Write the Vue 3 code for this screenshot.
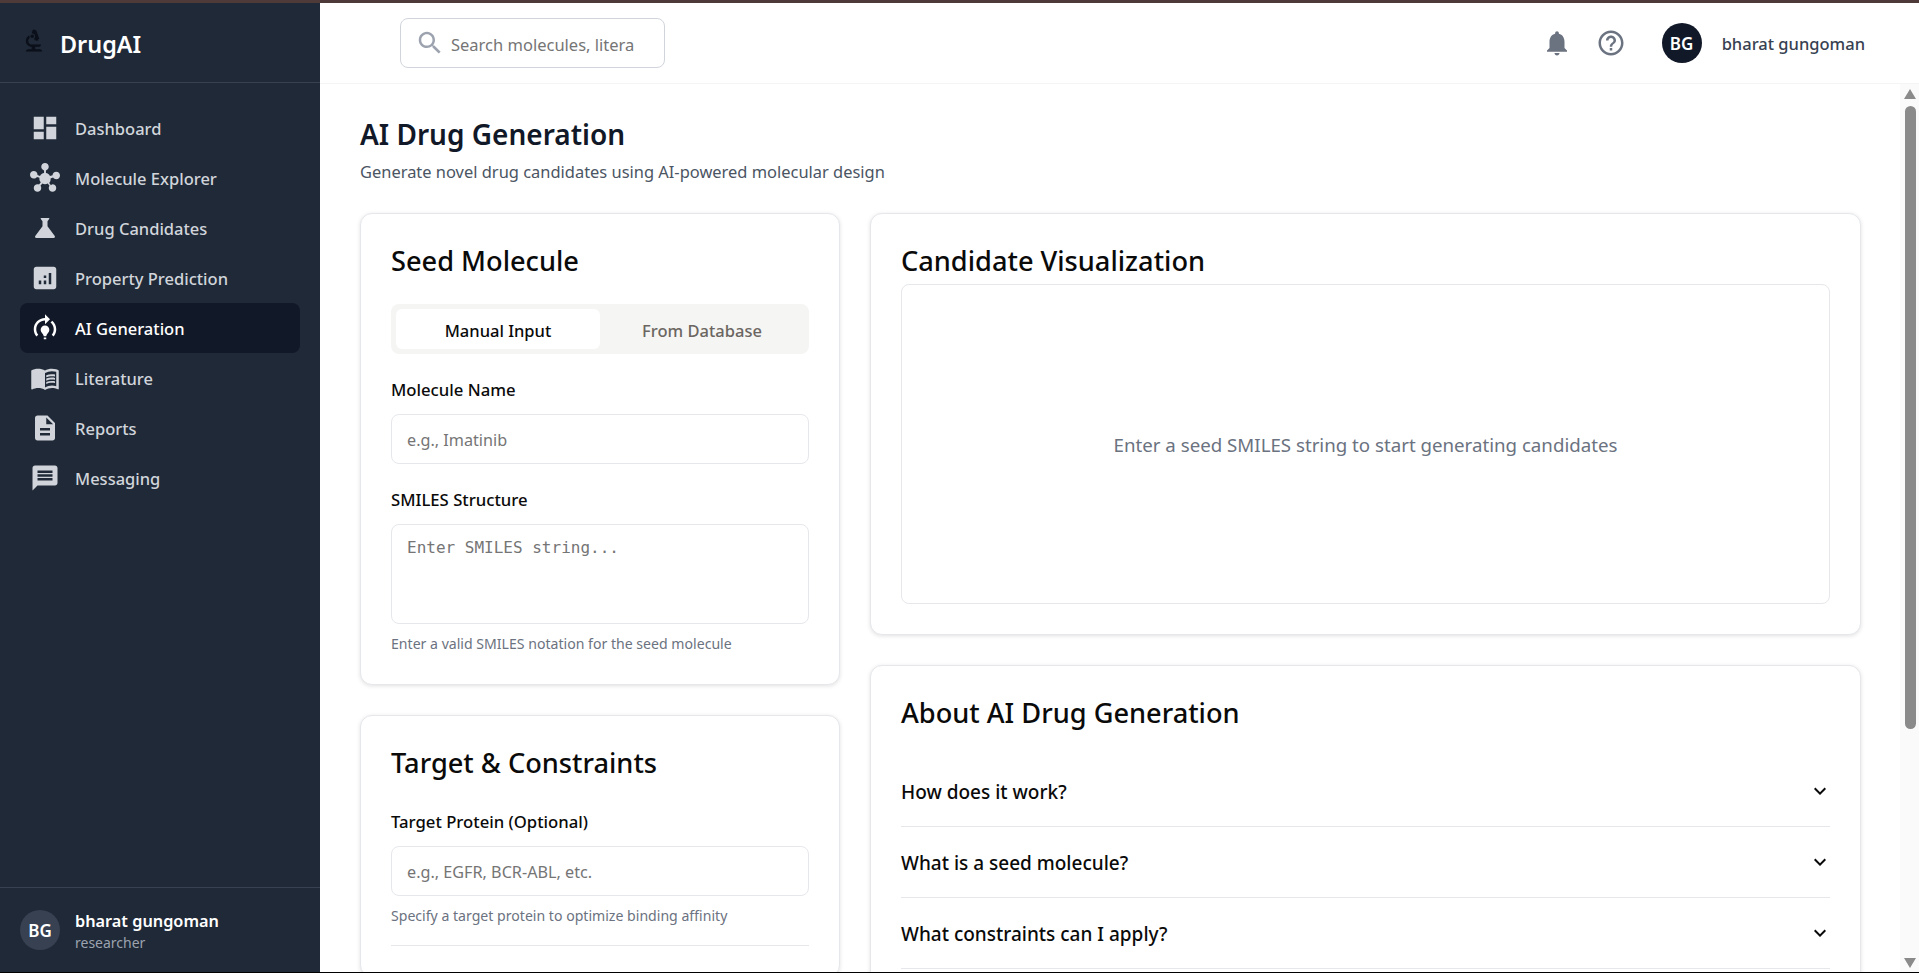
<template>
  <div class="page">
    <div class="top-strip"></div>
    <div class="shell">
      <aside class="sidebar">
        <div class="brand">
          <svg class="brand-icon" viewBox="0 0 24 24" fill="currentColor">
            <path d="M7 19c-1.1 0-2 .9-2 2h14c0-1.1-.9-2-2-2h-4v-2h3c1.1 0 2-.9 2-2h-8c-1.66 0-3-1.34-3-3 0-1.09.59-2.04 1.46-2.56C8.17 9.03 8 8.54 8 8c0-.21.04-.42.09-.62C6.28 8.13 5 9.92 5 12c0 2.76 2.24 5 5 5v2H7z" />
            <path d="M10.56 5.51C11.91 5.54 13 6.64 13 8c0 .75-.33 1.41-.85 1.87l.59 1.62.94-.34.34.94 1.88-.68-.34-.94.94-.34-2.74-7.52-.94.34-.34-.94-1.88.68.34.94-.94.35.56 1.53z" />
            <circle cx="10.5" cy="8" r="1.5" />
          </svg>
          <span class="brand-name">DrugAI</span>
        </div>
        <nav class="nav">
          <a v-for="item in navItems" :key="item.label" class="nav-item" :class="{ active: item.active }">
            <svg class="nav-icon" viewBox="0 0 24 24" fill="currentColor">
              <path v-for="(d, i) in item.paths" :key="i" :d="d" />
            </svg>
            <span>{{ item.label }}</span>
          </a>
        </nav>
        <div class="side-user">
          <div class="side-avatar">BG</div>
          <div class="side-user-text">
            <div class="side-name">bharat gungoman</div>
            <div class="side-role">researcher</div>
          </div>
        </div>
      </aside>

      <div class="right">
        <header class="topbar">
          <div class="search">
            <svg class="search-icon" viewBox="0 0 24 24" fill="currentColor">
              <path d="M15.5 14h-.79l-.28-.27C15.41 12.59 16 11.11 16 9.5 16 5.91 13.09 3 9.5 3S3 5.91 3 9.5 5.91 16 9.5 16c1.61 0 3.09-.59 4.23-1.57l.27.28v.79l5 4.99L20.49 19l-4.99-5zm-6 0C7.01 14 5 11.99 5 9.5S7.01 5 9.5 5 14 7.01 14 9.5 11.99 14 9.5 14z" />
            </svg>
            <input class="search-input" type="text" placeholder="Search molecules, literature..." />
          </div>
          <div class="top-actions">
            <svg class="top-icon" viewBox="0 0 24 24" fill="currentColor">
              <path d="M12 22c1.1 0 2-.9 2-2h-4c0 1.1.9 2 2 2zm6-6v-5c0-3.07-1.63-5.64-4.5-6.32V4c0-.83-.67-1.5-1.5-1.5s-1.5.67-1.5 1.5v.68C7.64 5.36 6 7.92 6 11v5l-2 2v1h16v-1l-2-2z" />
            </svg>
            <svg class="top-icon" viewBox="0 0 24 24" fill="currentColor">
              <path d="M11 18h2v-2h-2v2zm1-16C6.48 2 2 6.48 2 12s4.48 10 10 10 10-4.48 10-10S17.52 2 12 2zm0 18c-4.41 0-8-3.59-8-8s3.59-8 8-8 8 3.59 8 8-3.59 8-8 8zm0-14c-2.21 0-4 1.79-4 4h2c0-1.1.9-2 2-2s2 .9 2 2c0 2-3 1.75-3 5h2c0-2.25 3-2.5 3-5 0-2.21-1.79-4-4-4z" />
            </svg>
            <div class="top-user">
              <div class="top-avatar">BG</div>
              <span class="top-name">bharat gungoman</span>
            </div>
          </div>
        </header>

        <div class="body">
          <main class="content">
            <h1 class="page-title">AI Drug Generation</h1>
            <p class="page-sub">Generate novel drug candidates using AI-powered molecular design</p>

            <div class="grid">
              <div class="col">
                <section class="card">
                  <h2 class="card-title">Seed Molecule</h2>
                  <div class="tabs">
                    <button class="tab on">Manual Input</button>
                    <button class="tab">From Database</button>
                  </div>
                  <label class="label">Molecule Name</label>
                  <input class="field" type="text" placeholder="e.g., Imatinib" />
                  <label class="label second">SMILES Structure</label>
                  <textarea class="field area" placeholder="Enter SMILES string..."></textarea>
                  <p class="hint">Enter a valid SMILES notation for the seed molecule</p>
                </section>

                <section class="card">
                  <h2 class="card-title target-title">Target &amp; Constraints</h2>
                  <label class="label">Target Protein (Optional)</label>
                  <input class="field" type="text" placeholder="e.g., EGFR, BCR-ABL, etc." />
                  <p class="hint">Specify a target protein to optimize binding affinity</p>
                  <hr class="rule" />
                </section>
              </div>

              <div class="col">
                <section class="card">
                  <h2 class="card-title viz-title">Candidate Visualization</h2>
                  <div class="viz">Enter a seed SMILES string to start generating candidates</div>
                </section>

                <section class="card">
                  <h2 class="card-title about-title">About AI Drug Generation</h2>
                  <div v-for="q in questions" :key="q" class="faq">
                    <span class="faq-text">{{ q }}</span>
                    <svg class="chev" viewBox="0 0 24 24" fill="currentColor">
                      <path d="M16.59 8.59 12 13.17 7.41 8.59 6 10l6 6 6-6z" />
                    </svg>
                  </div>
                </section>
              </div>
            </div>
          </main>

          <div class="scrollbar">
            <span class="arrow up"></span>
            <div class="thumb"></div>
            <span class="arrow down"></span>
          </div>
        </div>
      </div>
    </div>
    <div class="bottom-line"></div>
  </div>
</template>

<script setup>
const navItems = [
  { label: 'Dashboard', paths: ['M3 13h8V3H3v10zm0 8h8v-6H3v6zm10 0h8V11h-8v10zm0-18v6h8V3h-8z'] },
  { label: 'Molecule Explorer', paths: ['M8.4 18.2c.38.5.6 1.12.6 1.8 0 1.66-1.34 3-3 3s-3-1.34-3-3 1.34-3 3-3c.44 0 .85.09 1.23.26l1.41-1.77c-.92-1.03-1.29-2.39-1.09-3.69l-2.03-.68c-.54.81-1.46 1.34-2.52 1.34-1.66 0-3-1.34-3-3s1.34-3 3-3 3 1.34 3 3c0 .07 0 .14-.01.21l2.03.68c.64-1.21 1.82-2.09 3.22-2.32V5.91C9.96 5.55 9 4.39 9 3c0-1.66 1.34-3 3-3s3 1.34 3 3c0 1.39-.96 2.55-2.25 2.91v2.16c1.4.23 2.58 1.11 3.22 2.32l2.03-.68V10c0-1.66 1.34-3 3-3s3 1.34 3 3-1.34 3-3 3c-1.06 0-1.98-.53-2.52-1.34l-2.03.68c.2 1.29-.16 2.65-1.09 3.69l1.41 1.77Q17.55 17 18 17c1.66 0 3 1.34 3 3s-1.34 3-3 3-3-1.34-3-3c0-.68.22-1.3.6-1.8l-1.41-1.77c-1.35.75-3.01.76-4.37 0L8.4 18.2z'] },
  { label: 'Drug Candidates', paths: ['M19.8 18.4 14 10.67V6.5l1.35-1.69c.26-.33.03-.81-.39-.81H9.04c-.42 0-.65.48-.39.81L10 6.5v4.17L4.2 18.4c-.49.66-.02 1.6.8 1.6h14c.82 0 1.29-.94.8-1.6z'] },
  { label: 'Property Prediction', paths: ['M19 3H5c-1.1 0-2 .9-2 2v14c0 1.1.9 2 2 2h14c1.1 0 2-.9 2-2V5c0-1.1-.9-2-2-2zM9 17H7v-3h2v3zm4 0h-2v-3h2v3zm0-5h-2v-2h2v2zm4 5h-2V8h2v9z'] },
  { label: 'AI Generation', active: true, paths: ['M15.5 13.5c0 2-2.5 3.5-2.5 5h-2c0-1.5-2.5-3-2.5-5 0-1.93 1.57-3.5 3.5-3.5s3.5 1.57 3.5 3.5zm-2.5 6h-2V21h2v-1.5zm6-6.5c0 1.68-.59 3.21-1.58 4.42l1.42 1.42C20.18 17.27 21 15.23 21 13c0-2.74-1.23-5.19-3.16-6.84l-1.42 1.42C17.99 8.86 19 10.82 19 13zM16 5l-4-4v3c-4.97 0-9 4.03-9 9 0 2.23.82 4.27 2.16 5.84l1.42-1.42C5.59 16.21 5 14.68 5 13c0-3.86 3.14-7 7-7v3l4-4z'] },
  { label: 'Literature', paths: [
    'M21 5c-1.11-.35-2.33-.5-3.5-.5-1.95 0-4.05.4-5.5 1.5-1.45-1.1-3.55-1.5-5.5-1.5S2.45 4.9 1 6v14.65c0 .25.25.5.5.5.1 0 .15-.05.25-.05C3.1 20.45 5.05 20 6.5 20c1.95 0 4.05.4 5.5 1.5 1.35-.85 3.8-1.5 5.5-1.5 1.65 0 3.35.3 4.75 1.05.1.05.15.05.25.05.25 0 .5-.25.5-.5V6c-.6-.45-1.25-.75-2-1zm0 13.5c-1.1-.35-2.3-.5-3.5-.5-1.7 0-4.15.65-5.5 1.5V8c1.35-.85 3.8-1.5 5.5-1.5 1.2 0 2.4.15 3.5.5v11.5z',
    'M17.5 10.5c.88 0 1.73.09 2.5.26V9.24c-.79-.15-1.64-.24-2.5-.24-1.7 0-3.24.29-4.5.83v1.66c1.13-.64 2.7-.99 4.5-.99zM13 12.49v1.66c1.13-.64 2.7-.99 4.5-.99.88 0 1.73.09 2.5.26V11.9c-.79-.15-1.64-.24-2.5-.24-1.7 0-3.24.3-4.5.83zM17.5 14.33c-1.7 0-3.24.29-4.5.83v1.66c1.13-.64 2.7-.99 4.5-.99.88 0 1.73.09 2.5.26v-1.52c-.79-.16-1.64-.24-2.5-.24z'
  ] },
  { label: 'Reports', paths: ['M14 2H6c-1.1 0-1.99.9-1.99 2L4 20c0 1.1.89 2 1.99 2H18c1.1 0 2-.9 2-2V8l-6-6zm2 16H8v-2h8v2zm0-4H8v-2h8v2zm-3-5V3.5L18.5 9H13z'] },
  { label: 'Messaging', paths: ['M20 2H4c-1.1 0-1.99.9-1.99 2L2 22l4-4h14c1.1 0 2-.9 2-2V4c0-1.1-.9-2-2-2zm-2 12H6v-2h12v2zm0-3H6V9h12v2zm0-3H6V6h12v2z'] }
]

const questions = ['How does it work?', 'What is a seed molecule?', 'What constraints can I apply?']
</script>

<style>
html, body {
  margin: 0;
  height: 100%;
  overflow: hidden;
}
</style>

<style scoped>
.page {
  height: 973px;
  display: flex;
  flex-direction: column;
  overflow: hidden;
  font-family: "Noto Sans", Inter, sans-serif;
  color: #111827;
  background: #fff;
}

.top-strip {
  height: 3px;
  flex: none;
  background: #4f3a3a;
}

.bottom-line {
  height: 1px;
  flex: none;
  background: #000;
}

.shell {
  flex: 1;
  min-height: 0;
  display: flex;
}

/* sidebar */
.sidebar {
  width: 320px;
  flex: none;
  display: flex;
  flex-direction: column;
  background: #1f2937;
}

.brand {
  height: 79px;
  flex: none;
  display: flex;
  align-items: center;
  padding-left: 20px;
  gap: 12px;
  border-bottom: 1px solid #374151;
}

.brand-icon {
  width: 28px;
  height: 28px;
  color: #0b0f19;
  margin-top: -4px;
}

.brand-name {
  padding-top: 2px;
  font-size: 23.4px;
  font-weight: 600;
  color: #fff;
}

.nav {
  flex: 1;
  padding: 20px 20px 0;
}

.nav-item {
  height: 50px;
  display: flex;
  align-items: center;
  gap: 15px;
  padding-left: 10px;
  border-radius: 8px;
  font-size: 16.5px;
  font-weight: 500;
  color: #d1d5db;
}

.nav-item.active {
  background: #111827;
  color: #fff;
}

.nav-icon {
  width: 30px;
  height: 30px;
  flex: none;
}

.side-user {
  height: 84px;
  flex: none;
  display: flex;
  align-items: center;
  gap: 15px;
  padding-left: 20px;
  border-top: 1px solid #374151;
}

.side-avatar {
  width: 40px;
  height: 40px;
  border-radius: 50%;
  background: #374151;
  color: #fff;
  font-size: 17px;
  font-weight: 600;
  display: flex;
  align-items: center;
  justify-content: center;
}

.side-user-text {
  padding-top: 3px;
}

.side-name {
  font-size: 16.3px;
  font-weight: 600;
  color: #fff;
  line-height: 22px;
}

.side-role {
  font-size: 14px;
  color: #9ca3af;
  line-height: 21px;
}

/* header */
.right {
  flex: 1;
  min-width: 0;
  display: flex;
  flex-direction: column;
}

.topbar {
  height: 80px;
  flex: none;
  display: flex;
  align-items: center;
  justify-content: space-between;
  padding: 0 54px 0 80px;
  border-bottom: 1px solid #f3f4f6;
}

.search {
  width: 265px;
  height: 50px;
  box-sizing: border-box;
  display: flex;
  align-items: center;
  gap: 6px;
  padding: 0 30px 0 14px;
  border: 1px solid #d1d5db;
  border-radius: 8px;
}

.search-icon {
  width: 30px;
  height: 30px;
  flex: none;
  color: #9ca3af;
}

.search-input {
  flex: 1;
  min-width: 0;
  border: 0;
  outline: 0;
  padding: 2px 0 0;
  font: 400 16.5px "Noto Sans", Inter, sans-serif;
  color: #111827;
}

.search-input::placeholder,
.field::placeholder {
  color: #757575;
  opacity: 1;
}

.top-actions {
  display: flex;
  align-items: center;
  gap: 24px;
}

.top-icon {
  width: 30px;
  height: 30px;
  color: #6b7280;
}

.top-user {
  display: flex;
  align-items: center;
  gap: 20px;
  margin-left: 12px;
}

.top-avatar {
  width: 40px;
  height: 40px;
  border-radius: 50%;
  background: #111827;
  color: #fff;
  font-size: 17px;
  font-weight: 600;
  display: flex;
  align-items: center;
  justify-content: center;
}

.top-name {
  padding-top: 1px;
  font-size: 16.5px;
  font-weight: 500;
  color: #374151;
}

/* page body */
.body {
  flex: 1;
  min-height: 0;
  display: flex;
}

.content {
  flex: 1;
  min-width: 0;
  overflow: hidden;
  padding: 30px 0 0 40px;
  box-sizing: border-box;
}

.page-title {
  margin: 0;
  font-size: 28px;
  line-height: 40px;
  font-weight: 600;
  color: #111827;
}

.page-sub {
  margin: 6px 0 0;
  font-size: 16.45px;
  line-height: 24px;
  color: #4b5563;
}

.grid {
  margin-top: 29px;
  width: 1501px;
  display: grid;
  grid-template-columns: 480px 991px;
  column-gap: 30px;
  align-items: start;
}

.col {
  display: flex;
  flex-direction: column;
  gap: 30px;
}

.card {
  box-sizing: border-box;
  padding: 30px;
  background: #fff;
  border: 1px solid #e5e7eb;
  border-radius: 12px;
  box-shadow: 0 1px 4px rgba(0, 0, 0, 0.12);
}

.card-title {
  margin: 0 0 26px;
  font-size: 27.2px;
  line-height: 34px;
  font-weight: 500;
  color: #0a0a0a;
}

.target-title {
  margin-bottom: 30px;
}

.tabs {
  display: flex;
  height: 50px;
  box-sizing: border-box;
  padding: 5px;
  background: #f5f5f4;
  border-radius: 8px;
  margin-bottom: 24px;
}

.tab {
  flex: 1;
  border: 0;
  border-radius: 6px;
  background: transparent;
  padding: 2px 0 0;
  font: 500 16.5px "Noto Sans", Inter, sans-serif;
  color: #6b6661;
}

.tab.on {
  background: #fff;
  color: #0a0a0a;
}

.label {
  display: block;
  margin-bottom: 12px;
  font-size: 16.7px;
  line-height: 24px;
  font-weight: 500;
  color: #0a0a0a;
}

.label.second {
  margin-top: 24px;
}

.field {
  display: block;
  width: 100%;
  height: 50px;
  box-sizing: border-box;
  padding: 2px 15px 0;
  border: 1px solid #e5e7eb;
  border-radius: 8px;
  outline: 0;
  font: 400 16.2px "Noto Sans", Inter, sans-serif;
  background: #fff;
}

.area {
  height: 100px;
  padding: 13px 15px 11px;
  resize: none;
  font: 400 16px "DejaVu Sans Mono", "Liberation Mono", monospace;
}

.hint {
  margin: 10px 0 0;
  font-size: 14.1px;
  line-height: 20px;
  color: #6b7280;
}

.rule {
  margin: 19px 0 0;
  border: 0;
  border-top: 1px solid #e5e7eb;
}

.viz-title {
  margin-bottom: 6px;
}

.viz {
  height: 320px;
  box-sizing: border-box;
  border: 1px solid #e5e7eb;
  border-radius: 8px;
  display: flex;
  align-items: center;
  justify-content: center;
  font-size: 18.7px;
  color: #6b7280;
}

.about-title {
  margin-bottom: 26px;
}

.faq {
  height: 71px;
  box-sizing: border-box;
  display: flex;
  align-items: center;
  justify-content: space-between;
  border-bottom: 1px solid #e5e7eb;
  font-size: 19px;
  font-weight: 500;
  color: #0a0a0a;
}

.faq-text {
  padding-top: 2px;
}

.chev {
  width: 24px;
  height: 24px;
  margin-right: -2px;
}

/* the page scrollbar */
.scrollbar {
  width: 19px;
  flex: none;
  box-sizing: border-box;
  padding-left: 1px;
  background: #fafafa;
  display: flex;
  flex-direction: column;
  align-items: center;
}

.arrow {
  width: 0;
  height: 0;
  border-left: 6px solid transparent;
  border-right: 6px solid transparent;
}

.arrow.up {
  margin-top: 5px;
  border-bottom: 10px solid #8a8a8a;
}

.arrow.down {
  margin-top: 229px;
  border-top: 10px solid #8a8a8a;
}

.thumb {
  width: 11px;
  height: 623px;
  margin-top: 7px;
  border-radius: 6px;
  background: #8a8a8a;
}
</style>
